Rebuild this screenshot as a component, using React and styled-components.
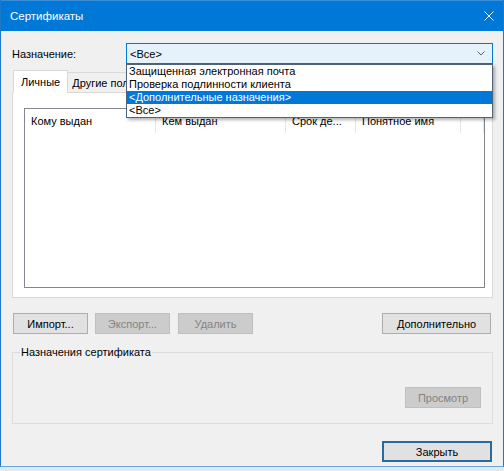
import React from "react";
import styled, { createGlobalStyle } from "styled-components";

const GlobalStyle = createGlobalStyle`
  html, body {
    margin: 0;
    padding: 0;
    background: #dcebf6;
  }
  body {
    font-family: "Liberation Sans", Arial, sans-serif;
    font-size: 11px;
    color: #000;
  }
`;

const tabs = ["Личные", "Другие пользователи"];
const columns = [
  { title: "Кому выдан", width: 131 },
  { title: "Кем выдан", width: 130 },
  { title: "Срок де...", width: 70 },
  { title: "Понятное имя", width: 105 },
];
const purposes = [
  "Защищенная электронная почта",
  "Проверка подлинности клиента",
  "<Дополнительные назначения>",
  "<Все>",
];

export default function App() {
  return (
    <>
      <GlobalStyle />
      <Window>
        <TitleBar>
          <span>Сертификаты</span>
          <CloseIcon viewBox="0 0 10 10">
            <path d="M0.5 0.5 L9.5 9.5 M9.5 0.5 L0.5 9.5" stroke="#fff" strokeWidth="1" />
          </CloseIcon>
        </TitleBar>
        <Body>
          <PurposeRow>
            <Label>Назначение:</Label>
            <Combo>
              <span>&lt;Все&gt;</span>
              <Chevron viewBox="0 0 8 5">
                <path d="M0.5 0.5 L4 4 L7.5 0.5" fill="none" stroke="#606060" strokeWidth="1" />
              </Chevron>
              <DropList>
                {purposes.map((p, i) => (
                  <DropItem key={p} $selected={i === 2}>{p}</DropItem>
                ))}
              </DropList>
            </Combo>
          </PurposeRow>

          <TabStrip>
            {tabs.map((t, i) => (
              <Tab key={t} $active={i === 0}>{t}</Tab>
            ))}
          </TabStrip>
          <TabPanel>
            <ListView>
              <HeaderRow>
                {columns.map((c) => (
                  <HeaderCell key={c.title} style={{ width: c.width }}>{c.title}</HeaderCell>
                ))}
                <HeaderFill />
              </HeaderRow>
            </ListView>
          </TabPanel>

          <ButtonRow>
            <Button $w={75}>Импорт...</Button>
            <Button $w={75} disabled>Экспорт...</Button>
            <Button $w={75} disabled style={{ marginLeft: 1 }}>Удалить</Button>
            <Spacer />
            <Button $w={109}>Дополнительно</Button>
          </ButtonRow>

          <Group>
            <Legend>Назначения сертификата</Legend>
            <GroupFooter>
              <Button $w={76} disabled>Просмотр</Button>
            </GroupFooter>
          </Group>

          <Footer>
            <Button $w={110} $default>Закрыть</Button>
          </Footer>
        </Body>
      </Window>
    </>
  );
}

const Window = styled.div`
  width: 504px;
  height: 467px;
  box-sizing: border-box;
  background: #f0f0f0;
  border-left: 1px solid #1f78c8;
  border-right: 1px solid #1f78c8;
  border-bottom: 1px solid #6aa6d8;
  display: flex;
  flex-direction: column;
`;

const TitleBar = styled.div`
  height: 31px;
  flex: none;
  background: #0078d7;
  color: #fff;
  display: flex;
  align-items: center;
  justify-content: space-between;
  padding: 0 9px 1px 9px;
  box-sizing: border-box;
  border-top: 1px solid #3b8fd8;
  font-size: 11.5px;
`;

const CloseIcon = styled.svg`
  width: 10px;
  height: 10px;
`;

const Body = styled.div`
  display: flex;
  flex-direction: column;
  padding: 12px 10px 0 11px;
`;

const PurposeRow = styled.div`
  display: flex;
  align-items: center;
  height: 21px;
`;

const Label = styled.div`
  width: 114px;
  flex: none;
`;

const Combo = styled.div`
  position: relative;
  width: 367px;
  height: 21px;
  box-sizing: border-box;
  border: 1px solid #0078d7;
  background: #e5f1fb;
  display: flex;
  align-items: center;
  justify-content: space-between;
  padding: 0 7px 0 3px;
`;

const Chevron = styled.svg`
  width: 8px;
  height: 5px;
`;

const DropList = styled.div`
  position: absolute;
  top: 20px;
  left: -1px;
  width: 367px;
  box-sizing: border-box;
  background: #fff;
  border: 1px solid #4f6478;
  box-shadow: 2px 2px 3px rgba(0, 0, 0, 0.3);
  z-index: 10;
`;

const DropItem = styled.div`
  height: 13px;
  line-height: 13px;
  padding-left: 2px;
  white-space: nowrap;
  background: ${(p) => (p.$selected ? "#0078d7" : "transparent")};
  color: ${(p) => (p.$selected ? "#fff" : "#000")};
`;

const TabStrip = styled.div`
  display: flex;
  align-items: flex-end;
  height: 23px;
  margin-top: 6px;
  padding-left: 1px;
  overflow: hidden;
  position: relative;
  z-index: 2;
  margin-bottom: -1px;
`;

const Tab = styled.div`
  flex: none;
  white-space: nowrap;
  box-sizing: border-box;
  height: ${(p) => (p.$active ? "23px" : "21px")};
  padding: 0 ${(p) => (p.$active ? "7px" : "4px")};
  display: flex;
  align-items: center;
  border: 1px solid #d9d9d9;
  border-bottom: ${(p) => (p.$active ? "1px solid #fff" : "1px solid #d9d9d9")};
  background: ${(p) => (p.$active ? "#fff" : "#f0f0f0")};
  margin-left: ${(p) => (p.$active ? "0" : "-1px")};
`;

const TabPanel = styled.div`
  height: 206px;
  box-sizing: border-box;
  border: 1px solid #d9d9d9;
  background: #fff;
  padding: 15px 10px 9px 11px;
  display: flex;
`;

const ListView = styled.div`
  flex: 1;
  border: 1px solid #828790;
  background: #fff;
`;

const HeaderRow = styled.div`
  display: flex;
  height: 24px;
`;

const HeaderCell = styled.div`
  flex: none;
  box-sizing: border-box;
  padding-left: 6px;
  display: flex;
  align-items: center;
  border-right: 1px solid #e5e5e5;
  white-space: nowrap;
  overflow: hidden;
`;

const HeaderFill = styled.div`
  width: 22px;
  border-right: 1px solid #e5e5e5;
`;

const ButtonRow = styled.div`
  display: flex;
  gap: 7px;
  margin-top: 15px;
  padding-left: 1px;
  padding-right: 2px;
`;

const Spacer = styled.div`
  flex: 1;
`;

const Button = styled.button`
  font: inherit;
  width: ${(p) => p.$w}px;
  height: 21px;
  padding: 0;
  box-sizing: border-box;
  background: #e1e1e1;
  border: ${(p) => (p.$default ? "2px solid #2a6aa2" : "1px solid #adadad")};
  color: #000;
  &:disabled {
    background: #cccccc;
    border-color: #bfbfbf;
    color: #838383;
  }
`;

const Group = styled.fieldset`
  margin: 11px 0 0 0;
  padding: 0 11px 0 0;
  height: 79px;
  box-sizing: border-box;
  border: 1px solid #dcdcdc;
`;

const Legend = styled.legend`
  padding: 0 1px;
  margin-left: 7px;
  line-height: 15px;
`;

const GroupFooter = styled.div`
  display: flex;
  justify-content: flex-end;
  margin-top: 27px;
`;

const Footer = styled.div`
  display: flex;
  justify-content: flex-end;
  margin-top: 17px;
  padding-right: 1px;
`;
